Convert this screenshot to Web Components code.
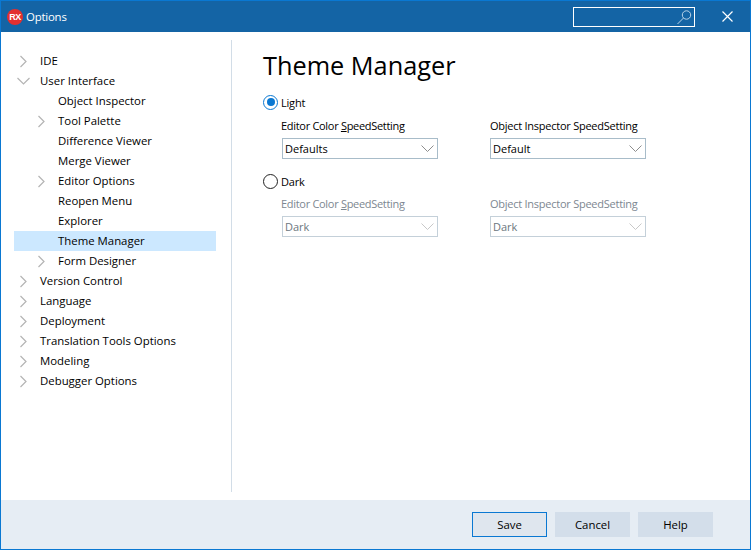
<!DOCTYPE html>
<html>
<head>
<meta charset="utf-8">
<title>Options</title>
<style>
  html, body { margin: 0; padding: 0; background: #fff; }
  body { font: 11.4px "Open Sans", "Noto Sans", sans-serif; color: #000; }
</style>
</head>
<body>
<options-window>
  <options-titlebar slot="title">Options</options-titlebar>
  <options-tree slot="tree">
    <tree-item arrow="right">IDE</tree-item>
    <tree-item arrow="down">User Interface</tree-item>
    <tree-item level="1">Object Inspector</tree-item>
    <tree-item level="1" arrow="right">Tool Palette</tree-item>
    <tree-item level="1">Difference Viewer</tree-item>
    <tree-item level="1">Merge Viewer</tree-item>
    <tree-item level="1" arrow="right">Editor Options</tree-item>
    <tree-item level="1">Reopen Menu</tree-item>
    <tree-item level="1">Explorer</tree-item>
    <tree-item level="1" selected>Theme Manager</tree-item>
    <tree-item level="1" arrow="right">Form Designer</tree-item>
    <tree-item arrow="right">Version Control</tree-item>
    <tree-item arrow="right">Language</tree-item>
    <tree-item arrow="right">Deployment</tree-item>
    <tree-item arrow="right">Translation Tools Options</tree-item>
    <tree-item arrow="right">Modeling</tree-item>
    <tree-item arrow="right">Debugger Options</tree-item>
  </options-tree>
  <theme-page slot="page"></theme-page>
  <dialog-button slot="buttons" focused>Save</dialog-button>
  <dialog-button slot="buttons">Cancel</dialog-button>
  <dialog-button slot="buttons">Help</dialog-button>
</options-window>

<script>
class OptionsWindow extends HTMLElement {
  constructor() {
    super();
    this.attachShadow({ mode: 'open' }).innerHTML = `
      <style>
        :host {
          display: flex;
          flex-direction: column;
          box-sizing: border-box;
          width: 751px;
          height: 550px;
          border: 1px solid #0a78d2;
          background: #fff;
        }
        .main { flex: 1; display: flex; min-height: 0; }
        .tree { width: 202px; margin-left: 13px; padding-top: 19px; }
        .split { width: 1px; margin: 8px 0 8px 15px; background: #d2dde7; }
        .page { flex: 1; padding: 15px 0 0 31px; }
        .foot {
          height: 49px;
          box-sizing: border-box;
          background: #e6edf4;
          display: flex;
          justify-content: flex-end;
          gap: 8px;
          padding: 12px 37px 0 0;
        }
      </style>
      <slot name="title"></slot>
      <div class="main">
        <div class="tree"><slot name="tree"></slot></div>
        <div class="split"></div>
        <div class="page"><slot name="page"></slot></div>
      </div>
      <div class="foot"><slot name="buttons"></slot></div>
    `;
  }
}

class OptionsTitlebar extends HTMLElement {
  constructor() {
    super();
    this.attachShadow({ mode: 'open' }).innerHTML = `
      <style>
        :host {
          display: flex;
          align-items: center;
          height: 31px;
          background: #1464a5;
          color: #fff;
          padding-left: 6px;
        }
        .logo {
          width: 16px; height: 16px; border-radius: 50%;
          background: #e3302f; color: #fff;
          font: bold 9px "Liberation Sans", sans-serif;
          display: flex; align-items: center; justify-content: center;
          letter-spacing: -.4px;
        }
        .name { margin-left: 3px; flex: 1; letter-spacing: -.2px; }
        .search {
          width: 122px; height: 20px; box-sizing: border-box;
          border: 1px solid #fff;
          display: flex; align-items: center; justify-content: flex-end;
          padding-right: 2px;
        }
        .close { display: block; margin: 0 17px 0 27px; }
      </style>
      <span class="logo">RX</span>
      <span class="name"><slot></slot></span>
      <div class="search">
        <svg width="15" height="15" viewBox="0 0 15 15" fill="none" stroke="#b9d3e8" stroke-width="1">
          <circle cx="9.5" cy="6" r="4.2"/>
          <path d="M6.5 9 .5 15"/>
        </svg>
      </div>
      <svg class="close" width="11" height="11" viewBox="0 0 11 11" fill="none" stroke="#fff" stroke-width="1.2">
        <path d="M.5.5l10 10M10.5.5l-10 10"/>
      </svg>
    `;
  }
}

class OptionsTree extends HTMLElement {
  constructor() {
    super();
    this.attachShadow({ mode: 'open' }).innerHTML = `
      <style>:host { display: block; }</style>
      <slot></slot>
    `;
  }
}

class TreeItem extends HTMLElement {
  connectedCallback() {
    if (this.shadowRoot) return;
    const level = Number(this.getAttribute('level') || 0);
    const arrow = this.getAttribute('arrow');
    const paths = { right: 'M1.5 2 7 7.5 1.5 13', down: 'M.5 4 6.5 10 12.5 4' };
    const icon = arrow
      ? `<svg width="15" height="15" viewBox="0 0 15 15" fill="none" stroke="#b4b4b4" stroke-width="1.2"><path d="${paths[arrow]}"/></svg>`
      : '';
    this.attachShadow({ mode: 'open' }).innerHTML = `
      <style>
        :host {
          display: flex;
          align-items: center;
          box-sizing: border-box;
          height: 20px;
          position: relative;
          padding: 0 0 2px ${26 + level * 18}px;
        }
        :host([selected]) { background: #cce8ff; }
        .arrow {
          position: absolute;
          left: ${(arrow === 'down' ? 3 : 5) + level * 18}px;
          top: 3px;
          height: 15px;
        }
      </style>
      <span class="arrow">${icon}</span>
      <slot></slot>
    `;
  }
}

class ThemePage extends HTMLElement {
  constructor() {
    super();
    this.attachShadow({ mode: 'open' }).innerHTML = `
      <style>
        :host { display: block; }
        h1 {
          margin: 0 0 9px;
          font: 400 25.3px/36px "Open Sans", "Noto Sans", sans-serif;
        }
        .group {
          display: grid;
          grid-template-columns: 156px 156px;
          column-gap: 52px;
          row-gap: 4px;
          margin: 5px 0 12px 19px;
        }
        .dark { color: #7d8791; margin: 4px 0 0 19px; }
        u { text-underline-offset: 1px; }
        .lbl {
          line-height: 17px;
          white-space: nowrap;
          font-size: 11px;
          letter-spacing: -.25px;
        }
        .ed { margin-left: -1px; letter-spacing: -.3px; }
      </style>
      <h1>Theme Manager</h1>
      <theme-radio checked>Light</theme-radio>
      <div class="group">
        <div class="lbl ed">Editor Color <u>S</u>peedSetting</div>
        <div class="lbl">Object Inspector SpeedSetting</div>
        <combo-box>Defaults</combo-box>
        <combo-box>Default</combo-box>
      </div>
      <theme-radio>Dark</theme-radio>
      <div class="group dark">
        <div class="lbl ed">Editor Color <u>S</u>peedSetting</div>
        <div class="lbl">Object Inspector SpeedSetting</div>
        <combo-box disabled>Dark</combo-box>
        <combo-box disabled>Dark</combo-box>
      </div>
    `;
  }
}

class ThemeRadio extends HTMLElement {
  constructor() {
    super();
    this.attachShadow({ mode: 'open' }).innerHTML = `
      <style>
        :host {
          display: flex;
          align-items: center;
          height: 20px;
          gap: 3px;
          font-size: 11px;
          letter-spacing: -.2px;
        }
        .dot {
          width: 15px; height: 15px; box-sizing: border-box;
          border-radius: 50%;
          border: 1.3px solid #222;
          display: flex; align-items: center; justify-content: center;
        }
        :host([checked]) .dot { border-color: #0a78d2; }
        :host([checked]) .dot::after {
          content: ""; width: 8px; height: 8px; border-radius: 50%;
          background: #0a78d2;
        }
      </style>
      <span class="dot"></span>
      <slot></slot>
    `;
  }
}

class ComboBox extends HTMLElement {
  constructor() {
    super();
    this.attachShadow({ mode: 'open' }).innerHTML = `
      <style>
        :host {
          display: flex;
          align-items: center;
          justify-content: space-between;
          box-sizing: border-box;
          height: 21px;
          padding: 0 2px 0 2px;
          border: 1px solid #a8bcc9;
          color: #000;
          font-size: 11px;
        }
        :host([disabled]) { color: #6d7780; border-color: #c4d0d9; }
        svg { display: block; margin-right: 1px; }
        path { stroke: #8d8d8d; }
        :host([disabled]) path { stroke: #c8c8c8; }
      </style>
      <slot></slot>
      <svg width="13" height="7" viewBox="0 0 13 7" fill="none" stroke-width="1"><path d="M.5.5 6.5 6.5 12.5.5"/></svg>
    `;
  }
}

class DialogButton extends HTMLElement {
  constructor() {
    super();
    this.attachShadow({ mode: 'open' }).innerHTML = `
      <style>
        :host {
          display: flex;
          align-items: center;
          justify-content: center;
          box-sizing: border-box;
          width: 75px;
          height: 25px;
          background: #d3deea;
        }
        :host([focused]) { background: #dfe6ee; border: 1px solid #0a78d2; }
      </style>
      <slot></slot>
    `;
  }
}

customElements.define('options-window', OptionsWindow);
customElements.define('options-titlebar', OptionsTitlebar);
customElements.define('options-tree', OptionsTree);
customElements.define('tree-item', TreeItem);
customElements.define('theme-page', ThemePage);
customElements.define('theme-radio', ThemeRadio);
customElements.define('combo-box', ComboBox);
customElements.define('dialog-button', DialogButton);
</script>
</body>
</html>
